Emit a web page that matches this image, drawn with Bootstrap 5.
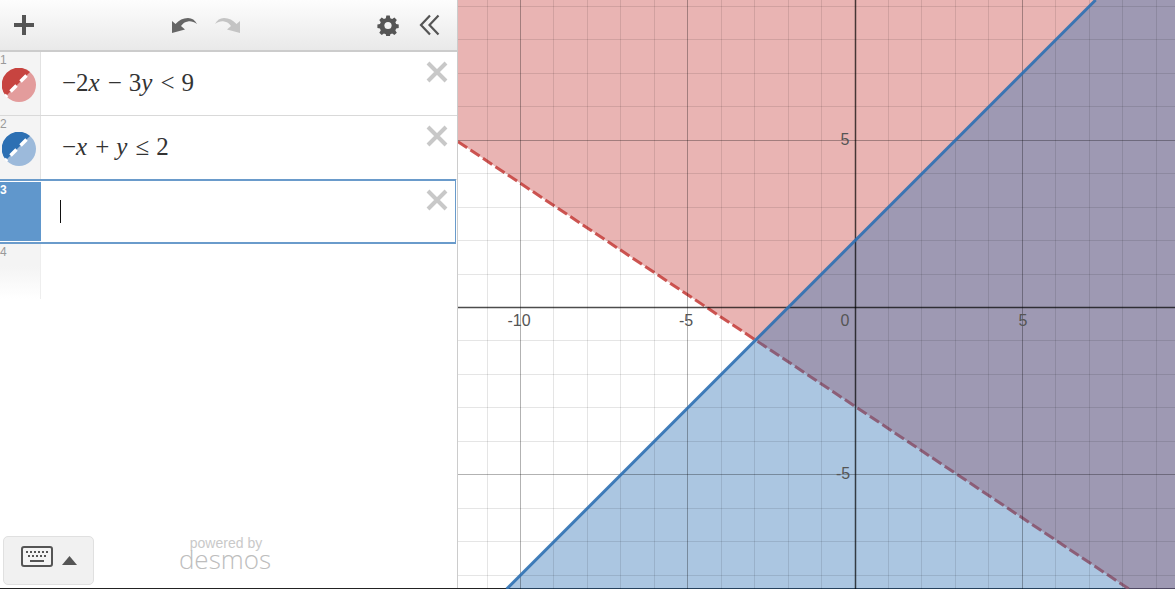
<!DOCTYPE html>
<html lang="en">

<head>
    <meta charset="UTF-8">
    <title>Desmos Graph</title>
    <link href="https://cdn.jsdelivr.net/npm/bootstrap@5.3.0/dist/css/bootstrap.min.css" rel="stylesheet">
    <style>
        html, body { height: 590px; overflow: hidden; }
        body { font-family: "Liberation Sans", Arial, sans-serif; background: #fff; }
        .calc-wrap { height: 589px; border-bottom: 1px solid #222; }
        .expr-panel { width: 458px; flex: none; border-right: 1px solid #ccc; position: relative; }
        .expr-top { height: 52px; background: linear-gradient(#fdfdfd, #e9e9e9); border-bottom: 2px solid #ccc; padding: 0 17px 0 12px; }
        .undo-group { margin-left: 135px; gap: 16px; }
        .tool-right { margin-left: auto; gap: 20px; }
        .expr-row { height: 64px; border-bottom: 1px solid #d9d9d9; position: relative; }
        .expr-gutter { width: 41px; flex: none; background: #f4f4f4; border-right: 1px solid #e2e2e2; position: relative; }
        .expr-num { position: absolute; left: 0; top: 2px; font-size: 12px; line-height: 13px; color: #999; }
        .expr-icon { position: absolute; left: 2px; top: 16px; }
        .expr-math { padding-left: 21px; font-family: "Liberation Serif", "Times New Roman", serif; font-size: 25px; color: #333; white-space: pre; padding-bottom: 2px; }
        .expr-math i { padding-right: 1px; }
        .expr-op { padding: 0 7px; }
        .expr-del { position: absolute; right: 8px; top: 8px; line-height: 0; }
        .row-focus { height: 65px; margin-top: -1px; margin-right: 1px; border: 1px solid #6a9bcb; border-width: 2px 1px 2px 0; }
        .row-focus .expr-gutter { background: #6097cc; border-right: 0; margin-top: 1px; margin-bottom: 1px; }
        .row-focus .expr-num { color: #fff; font-weight: 700; top: 2px; }
        .row-focus .expr-del { top: 7px; right: 6px; }
        .text-caret { width: 1px; height: 23px; background: #111; margin-left: 19px; }
        .row-empty { height: 55px; border: 0; }
        .row-empty .expr-gutter { background: linear-gradient(#f4f4f4 40%, #fff); border-right-color: #eee; }
        .key-btn { position: absolute; left: 3px; bottom: 3px; width: 91px; height: 49px; background: #f1f1f1; border: 1px solid #e0e0e0; border-radius: 5px; gap: 9px; padding-left: 17px; }
        .key-icon { margin-bottom: 8px; }
        .brand-box { position: absolute; left: 165px; bottom: 18px; width: 120px; text-align: center; color: #c9c9c9; }
        .brand-small { font-size: 14px; line-height: 12px; font-weight: 300; padding-left: 2px; }
        .brand-big { font-family: "Open Sans", sans-serif; font-size: 26px; line-height: 21px; font-weight: 300; color: #bdbdbd; }
        .graph-box { flex: 1 1 auto; min-width: 0; }
        .graph-box svg { display: block; }
        .tick { font-family: "Liberation Sans", Arial, sans-serif; font-size: 16px; fill: #555; text-anchor: middle; }
    </style>
</head>

<body>
    <div class="calc-wrap d-flex">
        <!--Expression list-->
        <div class="expr-panel">
            <div class="expr-top d-flex align-items-center">
                <svg width="24" height="24" viewBox="0 0 24 24"><path d="M10 2h4v8h8v4h-8v8h-4v-8H2v-4h8z" fill="#555"/></svg>
                <div class="undo-group d-flex align-items-center">
                    <svg width="27" height="18" viewBox="0 0 27 18"><path d="M1 17V5l3.500 3C8 4 12 2 17 2c4 0 7 2 9 6-3-2-6-3-9-2.500-3 .4-5 1.700-7 4.500l4 3.500z" fill="#666"/></svg>
                    <svg width="27" height="18" viewBox="0 0 27 18"><path d="M26 17V5l-3.500 3C19 4 15 2 10 2 6 2 3 4 1 8c3-2 6-3 9-2.500 3 .4 5 1.700 7 4.500l-4 3.500z" fill="#c4c4c4"/></svg>
                </div>
                <div class="tool-right d-flex align-items-center">
                    <svg width="22" height="22" viewBox="0 0 22 22"><path d="M9 0h4l.6 3 2.200.9L18.400 2.200l2.800 2.800-1.700 2.600.9 2.200 3 .6v4l-3 .6-.9 2.200 1.700 2.600-2.800 2.800-2.600-1.700-2.200.9-.6 3H9l-.6-3-2.200-.9-2.600 1.700-2.800-2.800 1.700-2.600-.9-2.200-3-.6v-4l3-.6.9-2.200L.8 5l2.800-2.800 2.600 1.700L8.400 3z" transform="translate(1.600 1.600) scale(.86)" fill="#555"/><circle cx="11" cy="11.500" r="3.600" fill="#f2f2f2"/></svg>
                    <svg width="21" height="22" viewBox="0 0 21 22" fill="none" stroke="#555" stroke-width="2.200"><path d="M11 1.500 2 11l9 9.500M19.500 1.500 10.500 11l9 9.500"/></svg>
                </div>
            </div>

            <div class="expr-row d-flex">
                <div class="expr-gutter">
                    <span class="expr-num">1</span>
                    <svg class="expr-icon" width="35" height="35" viewBox="0 0 35 35"><circle cx="17" cy="17" r="17" fill="#e39c9c"/><path d="M4 28A17 17 0 0 1 28 4z" fill="#c74440"/><path d="M8.500 23.500l6-6M18.500 13.500l6-6M3.500 28.500l1.500-1.500" stroke="#fff" stroke-width="3.500"/></svg>
                </div>
                <div class="expr-math d-flex align-items-center flex-grow-1">&minus;2<i>x</i><span class="expr-op">&minus;</span>3<i>y</i><span class="expr-op">&lt;</span>9</div>
                <div class="expr-del"><svg width="24" height="24" viewBox="0 0 24 24"><path d="M3 3l18 18M21 3 3 21" stroke="#c8c8c8" stroke-width="4"/></svg></div>
            </div>
            <div class="expr-row d-flex">
                <div class="expr-gutter">
                    <span class="expr-num">2</span>
                    <svg class="expr-icon" width="35" height="35" viewBox="0 0 35 35"><circle cx="17" cy="17" r="17" fill="#9cbadb"/><path d="M4 28A17 17 0 0 1 28 4z" fill="#2d70b3"/><path d="M8.500 23.500l6-6M18.500 13.500l6-6M3.500 28.500l1.500-1.500" stroke="#fff" stroke-width="3.500"/></svg>
                </div>
                <div class="expr-math d-flex align-items-center flex-grow-1">&minus;<i>x</i><span class="expr-op">+</span><i>y</i><span class="expr-op">&le;</span>2</div>
                <div class="expr-del"><svg width="24" height="24" viewBox="0 0 24 24"><path d="M3 3l18 18M21 3 3 21" stroke="#c8c8c8" stroke-width="4"/></svg></div>
            </div>
            <div class="expr-row row-focus d-flex">
                <div class="expr-gutter"><span class="expr-num">3</span></div>
                <div class="d-flex align-items-center flex-grow-1"><div class="text-caret"></div></div>
                <div class="expr-del"><svg width="24" height="24" viewBox="0 0 24 24"><path d="M3 3l18 18M21 3 3 21" stroke="#c8c8c8" stroke-width="4"/></svg></div>
            </div>
            <div class="expr-row row-empty d-flex">
                <div class="expr-gutter"><span class="expr-num">4</span></div>
            </div>

            <div class="key-btn d-flex align-items-center">
                <svg class="key-icon" width="32" height="22" viewBox="0 0 32 22"><rect x="1" y="1" width="30" height="19" rx="2" fill="#f4f4f4" stroke="#555" stroke-width="2"/><path d="M5 5h2v2H5zm4 0h2v2H9zm4 0h2v2h-2zm4 0h2v2h-2zm4 0h2v2h-2zm4 0h2v2h-2zM7 9h2v2H7zm4 0h2v2h-2zm4 0h2v2h-2zm4 0h2v2h-2zm4 0h2v2h-2zM9 14h14v2H9z" fill="#555"/></svg>
                <svg width="15" height="9" viewBox="0 0 15 9"><path d="M7.500 0 15 9H0z" fill="#555"/></svg>
            </div>
            <div class="brand-box">
                <div class="brand-small">powered by</div>
                <div class="brand-big">desmos</div>
            </div>
        </div>

        <!--Graph paper, drawn below-->
        <div class="graph-box">
            <svg id="graphPaper" width="717" height="589" viewBox="458 0 717 589"></svg>
        </div>
    </div>

    <script>
        // origin and scale read off the axis labels
        const ox = 855, oy = 307.5, unit = 33.45;
        const left = 458, right = 1175, bottom = 589;
        const px = x => ox + x * unit;
        const py = y => oy - y * unit;

        let out = "";

        // red region with its dashed edge goes under the blue region
        const redY = x => py((-2 * x - 9) / 3) - 1.5;
        const xl = (left - ox) / unit, xr = (right - ox) / unit;
        out += `<polygon points="${left},0 ${right},0 ${right},${redY(xr)} ${left},${redY(xl)}" fill="#c74440" fill-opacity=".4"/>`;
        out += `<line x1="${left}" y1="${redY(xl)}" x2="${right}" y2="${redY(xr)}" stroke="#c74440" stroke-opacity=".9" stroke-width="3" stroke-dasharray="11 4"/>`;
        const xTop = (oy / unit) - 2, xBot = (oy - bottom) / unit - 2;
        out += `<polygon points="${px(xTop)},0 ${right},0 ${right},${bottom} ${px(xBot)},${bottom}" fill="#2d70b3" fill-opacity=".4"/>`;

        // grid
        for (let i = -12; i <= 10; i++) {
            if (i === 0) continue;
            const x = Math.floor(px(i)) + .5;
            out += `<line x1="${x}" y1="0" x2="${x}" y2="${bottom}" stroke="#000" stroke-opacity="${i % 5 === 0 ? .3 : .1}"/>`;
        }
        for (let i = -8; i <= 9; i++) {
            if (i === 0) continue;
            const y = Math.floor(py(i)) + .5;
            out += `<line x1="${left}" y1="${y}" x2="${right}" y2="${y}" stroke="#000" stroke-opacity="${i % 5 === 0 ? .3 : .1}"/>`;
        }
        // axes
        out += `<line x1="${ox + .5}" y1="0" x2="${ox + .5}" y2="${bottom}" stroke="#000" stroke-opacity=".7" stroke-width="1.500"/>`;
        out += `<line x1="${left}" y1="${oy}" x2="${right}" y2="${oy}" stroke="#000" stroke-opacity=".7" stroke-width="1.500"/>`;

        // solid blue edge
        out += `<line x1="${px(xBot)}" y1="${bottom}" x2="${px(xTop)}" y2="0" stroke="#2d70b3" stroke-opacity=".9" stroke-width="3"/>`;

        // labels
        [[519, 326, "-10"], [686, 326, "-5"], [845, 326, "0"], [1023, 326, "5"], [845, 145, "5"], [843, 479, "-5"]].forEach(l => {
            out += `<text class="tick" x="${l[0]}" y="${l[1]}">${l[2]}</text>`;
        });

        document.getElementById("graphPaper").innerHTML = out;
    </script>

    <script src="https://cdn.jsdelivr.net/npm/bootstrap@5.3.0/dist/js/bootstrap.bundle.min.js"></script>
</body>

</html>
